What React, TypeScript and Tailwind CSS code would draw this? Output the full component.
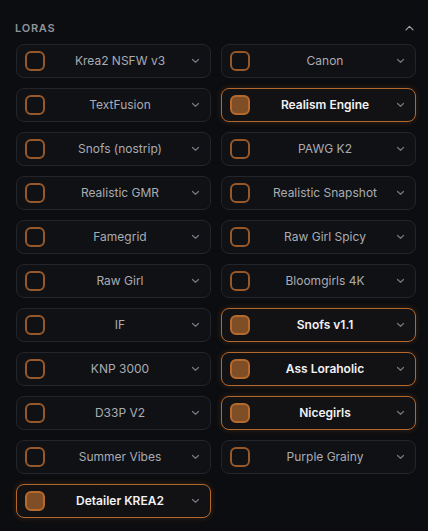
import React from 'react';

const loras: { name: string; on: boolean }[] = [
  { name: 'Krea2 NSFW v3', on: false },
  { name: 'Canon', on: false },
  { name: 'TextFusion', on: false },
  { name: 'Realism Engine', on: true },
  { name: 'Snofs (nostrip)', on: false },
  { name: 'PAWG K2', on: false },
  { name: 'Realistic GMR', on: false },
  { name: 'Realistic Snapshot', on: false },
  { name: 'Famegrid', on: false },
  { name: 'Raw Girl Spicy', on: false },
  { name: 'Raw Girl', on: false },
  { name: 'Bloomgirls 4K', on: false },
  { name: 'IF', on: false },
  { name: 'Snofs v1.1', on: true },
  { name: 'KNP 3000', on: false },
  { name: 'Ass Loraholic', on: true },
  { name: 'D33P V2', on: false },
  { name: 'Nicegirls', on: true },
  { name: 'Summer Vibes', on: false },
  { name: 'Purple Grainy', on: false },
  { name: 'Detailer KREA2', on: true },
];

function Chevron({ up }: { up?: boolean }) {
  return (
    <svg width="9" height="6" viewBox="0 0 9 6" fill="none" className="shrink-0">
      <path
        d={up ? 'M1 4.8L4.5 1.3L8 4.8' : 'M1.5 1.5L4.5 4.3L7.5 1.5'}
        stroke="currentColor"
        strokeWidth="1.2"
        strokeLinecap="round"
        strokeLinejoin="round"
      />
    </svg>
  );
}

function LoraCard({ name, on }: { name: string; on: boolean }) {
  return (
    <div
      className={
        on
          ? 'flex h-[34px] items-center rounded-[8px] border border-[#b4692c] bg-[#121215] pl-[8px] pr-[10px] shadow-[0_0_6px_rgba(180,105,44,0.25)]'
          : 'flex h-[34px] items-center rounded-[8px] border border-[#24252a] bg-[#101114] pl-[8px] pr-[10px]'
      }
    >
      <div
        className={
          on
            ? 'h-[20px] w-[20px] shrink-0 rounded-[6px] border-2 border-[#b66a2c] bg-[#7f4d26]'
            : 'h-[20px] w-[20px] shrink-0 rounded-[6px] border-2 border-[#98592a]'
        }
      />
      <span
        className={
          on
            ? 'ml-[4px] flex-1 truncate text-center text-[12px] font-semibold text-[#f1f1f3]'
            : 'ml-[4px] flex-1 truncate text-center text-[12px] text-[#a9acb3]'
        }
      >
        {name}
      </span>
      <span className="text-[#74777f]">
        <Chevron />
      </span>
    </div>
  );
}

export default function App() {
  return (
    <div
      className="h-[531px] w-[428px] bg-[#0c0d10] pl-[16px] pr-[12px] pt-[20px]"
      style={{ fontFamily: 'Inter, "Noto Sans", sans-serif' }}
    >
      <div className="flex h-[16px] items-center justify-between pr-[2px]">
        <span className="-ml-[1px] text-[11px] font-semibold tracking-[0.07em] text-[#8f929a]">LORAS</span>
        <span className="text-[#a3a6ad]">
          <Chevron up />
        </span>
      </div>
      <div className="mt-[8px] grid grid-cols-2 gap-x-[10px] gap-y-[10px]">
        {loras.map((l) => (
          <LoraCard key={l.name} name={l.name} on={l.on} />
        ))}
      </div>
    </div>
  );
}
